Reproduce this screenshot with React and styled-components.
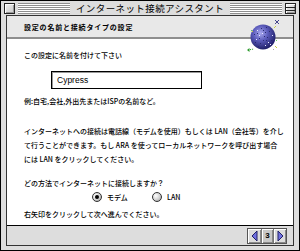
import React from "react";
import styled, { createGlobalStyle } from "styled-components";

const GlobalStyle = createGlobalStyle`
  body {
    margin: 0;
    background: #fff;
  }
`;

const Window = styled.div`
  width: 300px;
  height: 251px;
  box-sizing: border-box;
  border: 1px solid #000;
  background: #dddddd;
  display: flex;
  flex-direction: column;
  font-family: "Noto Sans CJK JP", sans-serif;
  color: #000;
`;

const TitleBar = styled.div`
  height: 14px;
  display: flex;
  align-items: center;
  padding: 0 2px 0 2px;
  gap: 2px;
`;

const BoxButton = styled.div`
  width: 9px;
  height: 9px;
  border: 1px solid #222;
  background: linear-gradient(135deg, #f4f4f4 0%, #c8c8c8 100%);
  box-shadow: inset 1px 1px 0 #fff, inset -1px -1px 0 #999;
  position: relative;
  flex-shrink: 0;
  margin: 0 1px;
`;

const CollapseLine = styled.div`
  position: absolute;
  left: 0;
  right: 0;
  top: 3px;
  height: 2px;
  border-top: 1px solid #222;
  border-bottom: 1px solid #222;
`;

const Stripes = styled.div`
  flex: 1;
  height: 11px;
  background: repeating-linear-gradient(
    to bottom,
    #8e8e8e 0 1px,
    #ffffff 1px 2px
  );
`;

const TitleText = styled.div`
  font-size: 9.5px;
  line-height: 14px;
  padding: 0 4px;
  white-space: nowrap;
  letter-spacing: 0.4px;
`;

const Frame = styled.div`
  flex: 1;
  display: flex;
  padding: 0 5px 4px 5px;
  min-height: 0;
`;

const Content = styled.div`
  flex: 1;
  border: 1px solid #333;
  background: #fff;
  display: flex;
  flex-direction: column;
  position: relative;
`;

const Header = styled.div`
  height: 21px;
  background: #e8e8e8;
  border-bottom: 2px solid #8e8e8e;
  padding-left: 17px;
  display: flex;
  align-items: center;
  position: relative;
`;

const HeaderText = styled.div`
  font-size: 7px;
  font-weight: 700;
  letter-spacing: 0.8px;
`;

const GlobeWrap = styled.div`
  position: absolute;
  right: 13px;
  top: 3px;
  width: 34px;
  height: 34px;
  z-index: 2;
`;

const Body = styled.div`
  flex: 1;
  padding-left: 17px;
  display: flex;
  flex-direction: column;
  font-size: 7px;
  font-weight: 500;
  line-height: 14px;
`;

const Line = styled.div`
  margin-top: ${(p) => p.mt || 0}px;
  white-space: nowrap;
`;

const Paragraph = styled.div`
  margin-top: ${(p) => p.mt || 0}px;
  white-space: nowrap;
  line-height: 14px;
`;

const NameInput = styled.div`
  margin: 9px 0 0 27px;
  width: 144px;
  height: 16px;
  border: 1px solid #000;
  box-shadow: inset 1px 1px 0 #999;
  font-family: "Liberation Sans", Arial, sans-serif;
  font-size: 8.5px;
  font-weight: 400;
  line-height: 16px;
  padding-left: 5px;
  box-sizing: content-box;
`;

const RadioRow = styled.div`
  display: flex;
  align-items: center;
  height: 14px;
  padding-left: 68px;
`;

const RadioItem = styled.div`
  display: flex;
  align-items: center;
  gap: 5px;
  width: 60px;
`;

const RadioCircle = styled.div`
  width: 8px;
  height: 8px;
  border-radius: 50%;
  border: 1px solid #333;
  background: radial-gradient(circle at 35% 35%, #ffffff 0%, #d0d0d0 55%, #8a8a8a 100%);
  display: flex;
  align-items: center;
  justify-content: center;
`;

const RadioDot = styled.div`
  width: 4px;
  height: 4px;
  border-radius: 50%;
  background: #000;
`;

const Footer = styled.div`
  height: 19px;
  border-top: 1px solid #000;
  background: #dddddd;
  display: flex;
  align-items: center;
  justify-content: flex-end;
  padding-right: 6px;
`;

const Pager = styled.div`
  display: flex;
  border: 1px solid #555;
  height: 14px;
`;

const PagerButton = styled.div`
  width: ${(p) => p.w}px;
  height: 14px;
  box-sizing: border-box;
  background: ${(p) => (p.flat ? "#c8c8c8" : "#dcdcdc")};
  box-shadow: inset 1px 1px 0 #fff, inset -1px -1px 0 #888;
  border-left: ${(p) => (p.divider ? "1px solid #777" : "none")};
  display: flex;
  align-items: center;
  justify-content: center;
  font-family: "Liberation Sans", Arial, sans-serif;
  font-size: 8px;
  font-weight: 700;
`;

function Globe() {
  const specks = [
    [11, 11], [15, 9], [19, 13], [13, 16], [21, 18], [17, 21], [10, 20],
    [23, 12], [14, 24], [19, 26], [25, 21], [8, 15], [16, 14], [20, 8],
    [12, 27], [24, 25], [9, 23], [18, 17], [22, 23], [13, 19], [17, 11],
    [26, 16], [11, 14], [20, 21],
  ];
  return (
    <svg width="34" height="34" viewBox="0 0 34 34">
      <defs>
        <radialGradient id="g" cx="40%" cy="35%" r="65%">
          <stop offset="0%" stopColor="#a8a8ee" />
          <stop offset="45%" stopColor="#5c5cbc" />
          <stop offset="100%" stopColor="#20206a" />
        </radialGradient>
      </defs>
      <circle cx="17" cy="18" r="12.5" fill="url(#g)" />
      {specks.map(([x, y], i) => (
        <rect key={i} x={x} y={y} width="1" height="1" fill={i % 3 === 0 ? "#e8e8ff" : "#2a2a70"} />
      ))}
      <path d="M7 13 L6 12 M28 9 L30 7 M29 27 L31 29" stroke="#c8d040" strokeWidth="1" />
      <rect x="5" y="11" width="1" height="1" fill="#6c6" />
      <rect x="30" y="21" width="1" height="1" fill="#6c6" />
      <rect x="27" y="30" width="1" height="1" fill="#aaa" />
      <path d="M29 1 L33 5 M33 1 L29 5" stroke="#44448a" strokeWidth="1" />
      <path d="M2 31 L8 30" stroke="#2a9a2a" strokeWidth="1" strokeDasharray="1 1" />
      <path d="M1 31 L3.5 29 L3.5 33 Z" fill="#2a9a2a" />
    </svg>
  );
}

function Arrow({ dir }) {
  const d = dir === "left" ? "M7 1 L7 11 L2 6 Z" : "M2 1 L2 11 L7 6 Z";
  return (
    <svg width="9" height="12" viewBox="0 0 9 12">
      <path d={d} fill="#7070e0" stroke="#222266" strokeWidth="1" strokeLinejoin="round" />
    </svg>
  );
}

export default function App() {
  return (
    <>
      <GlobalStyle />
      <Window>
        <TitleBar>
          <BoxButton />
          <Stripes />
          <TitleText>インターネット接続アシスタント</TitleText>
          <Stripes />
          <BoxButton>
            <CollapseLine />
          </BoxButton>
        </TitleBar>
        <Frame>
          <Content>
            <Header>
              <HeaderText>設定の名前と接続タイプの設定</HeaderText>
              <GlobeWrap>
                <Globe />
              </GlobeWrap>
            </Header>
            <Body>
              <Line mt={9}>この設定に名前を付けて下さい</Line>
              <NameInput>Cypress</NameInput>
              <Line mt={5}>例:自宅,会社,外出先またはISPの名前など。</Line>
              <Paragraph mt={16}>
                インターネットへの接続は電話線（モデムを使用）もしくは LAN（会社等）を介し
                <br />
                て行うことができます。もし ARA を使ってローカルネットワークを呼び出す場合
                <br />
                には LAN をクリックしてください。
              </Paragraph>
              <Line mt={10}>どの方法でインターネットに接続しますか？</Line>
              <RadioRow>
                <RadioItem>
                  <RadioCircle>
                    <RadioDot />
                  </RadioCircle>
                  モデム
                </RadioItem>
                <RadioItem>
                  <RadioCircle />
                  LAN
                </RadioItem>
              </RadioRow>
              <Line mt={3}>右矢印をクリックして次へ進んでください。</Line>
            </Body>
            <Footer>
              <Pager>
                <PagerButton w={13}>
                  <Arrow dir="left" />
                </PagerButton>
                <PagerButton w={12} flat divider>
                  3
                </PagerButton>
                <PagerButton w={13} divider>
                  <Arrow dir="right" />
                </PagerButton>
              </Pager>
            </Footer>
          </Content>
        </Frame>
      </Window>
    </>
  );
}
